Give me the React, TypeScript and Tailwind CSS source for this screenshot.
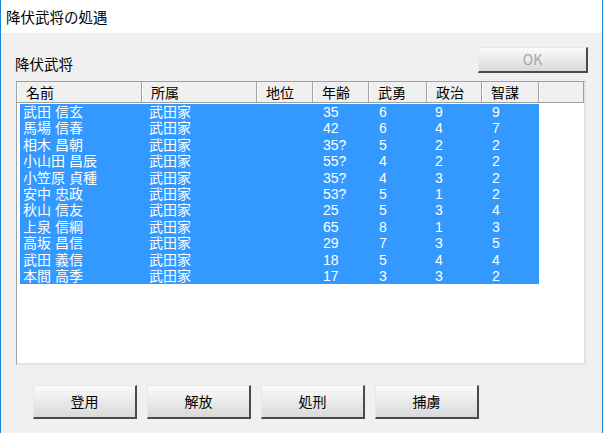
import React from "react";

type Officer = {
  name: string;
  clan: string;
  rank: string;
  age: string;
  war: string;
  pol: string;
  int: string;
};

const officers: Officer[] = [
  { name: "武田 信玄", clan: "武田家", rank: "", age: "35", war: "6", pol: "9", int: "9" },
  { name: "馬場 信春", clan: "武田家", rank: "", age: "42", war: "6", pol: "4", int: "7" },
  { name: "相木 昌朝", clan: "武田家", rank: "", age: "35?", war: "5", pol: "2", int: "2" },
  { name: "小山田 昌辰", clan: "武田家", rank: "", age: "55?", war: "4", pol: "2", int: "2" },
  { name: "小笠原 貞種", clan: "武田家", rank: "", age: "35?", war: "4", pol: "3", int: "2" },
  { name: "安中 忠政", clan: "武田家", rank: "", age: "53?", war: "5", pol: "1", int: "2" },
  { name: "秋山 信友", clan: "武田家", rank: "", age: "25", war: "5", pol: "3", int: "4" },
  { name: "上泉 信綱", clan: "武田家", rank: "", age: "65", war: "8", pol: "1", int: "3" },
  { name: "高坂 昌信", clan: "武田家", rank: "", age: "29", war: "7", pol: "3", int: "5" },
  { name: "武田 義信", clan: "武田家", rank: "", age: "18", war: "5", pol: "4", int: "4" },
  { name: "本間 高季", clan: "武田家", rank: "", age: "17", war: "3", pol: "3", int: "2" },
];

const headers = [
  { label: "名前", w: "w-[125px]" },
  { label: "所属", w: "w-[115px]" },
  { label: "地位", w: "w-[56px]" },
  { label: "年齢", w: "w-[56px]" },
  { label: "武勇", w: "w-[58px]" },
  { label: "政治", w: "w-[55px]" },
  { label: "智謀", w: "w-[57px]" },
];

function WinButton({
  label,
  disabled,
  className,
}: {
  label: string;
  disabled?: boolean;
  className: string;
}) {
  return (
    <button
      className={`${className} flex items-center justify-center border-t border-l border-[#e8e8e8] border-r-2 border-b-2 border-r-[#4a4a4a] border-b-[#4a4a4a] bg-gradient-to-b from-[#fbfbfb] to-[#d9d9d9] text-[14px] ${
        disabled ? "text-[#a6a6a6]" : "text-black"
      }`}
    >
      {label}
    </button>
  );
}

export default function App() {
  return (
    <div className="w-[603px] h-[433px] bg-[#f0f0f0] border-x border-[#1883d7] flex flex-col font-['Noto_Sans_CJK_JP',sans-serif] overflow-hidden">
      {/* Title bar */}
      <div className="h-[33px] bg-white flex items-center pl-[5px] text-[14.5px] text-black shrink-0">
        降伏武将の処遇
      </div>

      <div className="flex flex-col px-[14px]">
        {/* Label + OK */}
        <div className="flex justify-between items-end pt-[14px]">
          <span className="text-[14.5px] leading-[16px] mb-[1px] text-black">降伏武将</span>
          <WinButton label="OK" disabled className="w-[110px] h-[26px]" />
        </div>

        {/* List */}
        <div className="mt-[8px] ml-[1px] w-[570px] h-[284px] bg-white border-t border-l border-[#a0a0a0] border-r-2 border-b-2 border-r-[#e3e3e3] border-b-[#e3e3e3] flex flex-col">
          <div className="flex h-[21px] bg-[#f0f0f0] border-b border-[#a0a0a0] shrink-0">
            {headers.map((h) => (
              <div
                key={h.label}
                className={`${h.w} h-full pl-[8px] flex items-center border-l border-white border-r border-r-[#a0a0a0] text-[14px] text-black`}
              >
                {h.label}
              </div>
            ))}
            <div className="flex-1 h-full border-l border-white border-r border-r-[#a0a0a0]" />
          </div>

          <div className="pt-[1px] pl-[3px]">
            <div className="w-[519px] bg-[#3399ff] text-white text-[14px] font-['Liberation_Sans','Noto_Sans_CJK_JP',sans-serif]">
              {officers.map((o, i) => (
                <div key={i} className="flex h-[16.4px] leading-[16.4px]">
                  <div className="w-[122px] pl-[3px] whitespace-nowrap">{o.name}</div>
                  <div className="w-[115px] pl-[7px]">{o.clan}</div>
                  <div className="w-[56px] pl-[8px]">{o.rank}</div>
                  <div className="w-[56px] pl-[10px]">{o.age}</div>
                  <div className="w-[58px] pl-[10px]">{o.war}</div>
                  <div className="w-[55px] pl-[8px]">{o.pol}</div>
                  <div className="w-[57px] pl-[10px]">{o.int}</div>
                </div>
              ))}
            </div>
          </div>
        </div>

        {/* Action buttons */}
        <div className="flex gap-[10px] mt-[20px] ml-[18px]">
          <WinButton label="登用" className="w-[104px] h-[34px]" />
          <WinButton label="解放" className="w-[104px] h-[34px]" />
          <WinButton label="処刑" className="w-[104px] h-[34px]" />
          <WinButton label="捕虜" className="w-[104px] h-[34px]" />
        </div>
      </div>
    </div>
  );
}
